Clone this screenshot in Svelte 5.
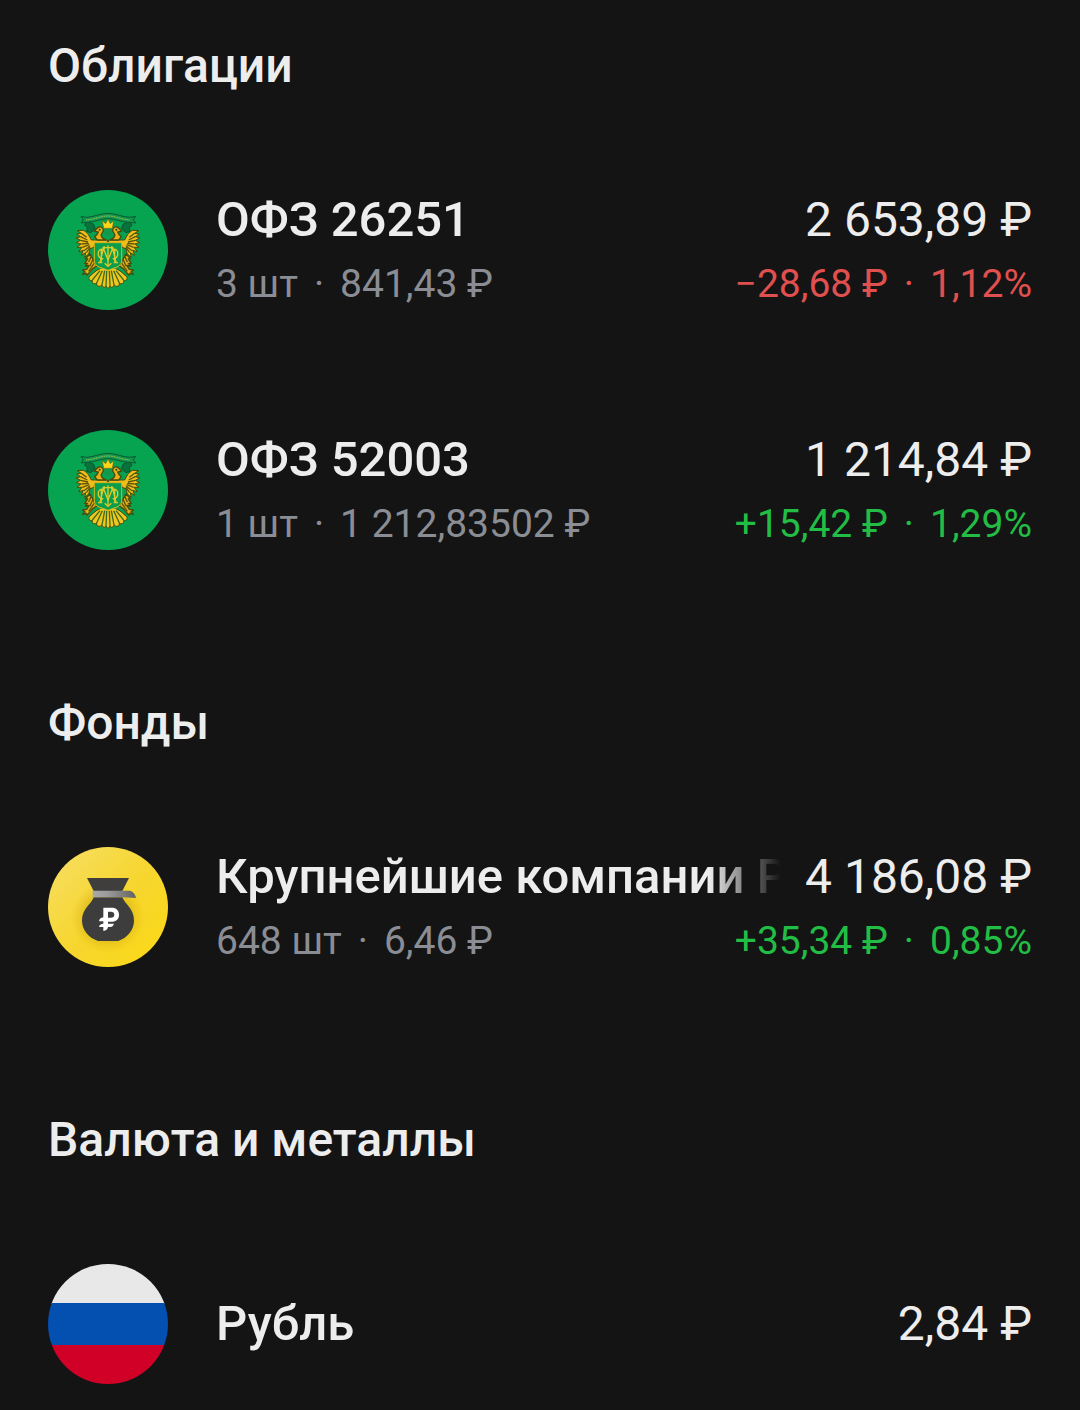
<script lang="ts">
	type Item = {
		icon: 'ofz' | 'fund' | 'rub';
		name: string;
		total: string;
		count?: string;
		price?: string;
		diff?: string;
		percent?: string;
		down?: boolean;
	};

	const groups: { title: string; items: Item[] }[] = [
		{
			title: 'Облигации',
			items: [
				{
					icon: 'ofz',
					name: 'ОФЗ 26251',
					total: '2 653,89 ₽',
					count: '3 шт',
					price: '841,43 ₽',
					diff: '−28,68 ₽',
					percent: '1,12%',
					down: true
				},
				{
					icon: 'ofz',
					name: 'ОФЗ 52003',
					total: '1 214,84 ₽',
					count: '1 шт',
					price: '1 212,83502 ₽',
					diff: '+15,42 ₽',
					percent: '1,29%'
				}
			]
		},
		{
			title: 'Фонды',
			items: [
				{
					icon: 'fund',
					name: 'Крупнейшие компании Р',
					total: '4 186,08 ₽',
					count: '648 шт',
					price: '6,46 ₽',
					diff: '+35,34 ₽',
					percent: '0,85%'
				}
			]
		},
		{
			title: 'Валюта и металлы',
			items: [{ icon: 'rub', name: 'Рубль', total: '2,84 ₽' }]
		}
	];
</script>

{#snippet wing()}
	<!-- half of the eagle, mirrored for the other side -->
	<path
		d="M202 180 L154 180 C148 168 142 156 130 151 L112 152 L124 160 L110 162 L122 170 L108 174 L122 181 L109 188 L123 192 L111 202 L126 202 L116 215 L130 211 L124 226 L137 218 L134 232 L146 222 L150 206 L162 202 L164 190 L202 190 Z"
		fill="#efc01b"
		stroke="#4d4a0c"
		stroke-width="3"
		stroke-linejoin="round"
	/>
	<path
		d="M124 160 L140 172 M122 170 L142 180 M122 181 L144 186 M124 192 L146 190 M127 202 L148 194 M132 212 L150 198 M139 218 L150 202"
		stroke="#5c5208"
		stroke-width="4"
		fill="none"
	/>
	<path
		d="M198 180 C184 174 180 166 187 158 C194 150 188 139 177 141 C169 143 170 149 163 154 L175 156 C173 162 170 166 164 170 L172 180 Z"
		fill="#e4b416"
		stroke="#4d4a0c"
		stroke-width="4"
		stroke-linejoin="round"
	/>
	<circle cx="179" cy="149" r="3" fill="#2d3a0c" />
	<path
		d="M150 222 L136 236 L143 237 L134 250 L143 250 L136 258 L148 256 L140 268 L128 270 L135 276 L128 283 L139 280 L141 286 L158 266 L170 258 L162 244 Z"
		fill="#deb01a"
		stroke="#4d4a0c"
		stroke-width="4"
		stroke-linejoin="round"
	/>
	<path d="M154 228 L146 246 M159 238 L150 258 M164 248 L146 274" stroke="#5c5208" stroke-width="4" />
	<path
		d="M204 266 L180 266 C166 272 158 282 150 288 C143 294 148 304 157 301 C155 309 163 315 170 309 C168 318 179 323 186 315 C187 322 196 324 198 318 L204 326 Z"
		fill="#efc71d"
	/>
	<path
		d="M180 266 C166 272 158 282 150 288 C143 294 148 304 157 301 C155 309 163 315 170 309 C168 318 179 323 186 315 C187 322 196 324 198 318 L204 326"
		fill="none"
		stroke="#4d4a0c"
		stroke-width="3"
	/>
	<path
		d="M180 272 L157 300 M187 272 L170 309 M194 272 L186 315 M200 272 L198 318"
		stroke="#3f6a1c"
		stroke-width="4"
		fill="none"
	/>
{/snippet}

<main class="portfolio">
	{#each groups as group}
		<section class="group">
			<h2 class="group-title">{group.title}</h2>
			<ul class="list">
				{#each group.items as item}
					<li class="row">
						{#if item.icon === 'ofz'}
							<svg class="icon" viewBox="24 30 360 360" aria-hidden="true">
								<circle cx="204" cy="210" r="180" fill="#06a350" />
								<path
									d="M140 124 L134 136 L142 142 L140 154 L152 158 L166 146 L160 132 Z M268 124 L276 136 L268 142 L270 154 L258 158 L244 146 L250 132 Z"
									fill="#08733c"
									stroke="#07552e"
									stroke-width="3"
								/>
								<path
									d="M123 109 L137 112 C160 112 180 100 204 100 C228 100 248 112 271 112 L287 109 L280 119 L287 129 L268 127 C244 127 226 116 204 116 C182 116 164 127 140 127 L123 129 L130 119 Z"
									fill="#12964e"
									stroke="#075b31"
									stroke-width="3"
								/>
								<path
									d="M138 120 C162 119 182 108 204 108 C226 108 246 119 270 120"
									fill="none"
									stroke="#8fb949"
									stroke-width="4"
									stroke-dasharray="3 2"
								/>
								{@render wing()}
								<g transform="translate(408 0) scale(-1 1)">{@render wing()}</g>
								<path
									d="M191 145 L187 122 L197 131 L204 117 L211 131 L221 122 L217 145 Z"
									fill="#ffd51c"
									stroke="#75690d"
									stroke-width="2"
								/>
								<path
									d="M192 148 H216 V156 C216 164 210 168 204 170 C198 168 192 164 192 156 Z"
									fill="#12994e"
								/>
								<path
									d="M163 188 H245 V242 C245 252 238 259 228 262 L204 271 L180 262 C170 259 163 252 163 242 Z"
									fill="#0b9d4e"
									stroke="#d6b81a"
									stroke-width="3"
								/>
								<g fill="none" stroke="#dccb2a" stroke-width="4">
									<path d="M204 196 V258 M188 203 H220 M193 199 V207 M215 199 V207" />
									<path d="M180 248 L190 205 L204 240 L218 205 L228 248 M174 248 H187 M221 248 H234" />
									<path d="M192 209 C169 201 169 239 190 236 M216 209 C239 201 239 239 218 236" />
									<path d="M184 207 V245 M224 207 V245 M194 250 L204 259 L214 250" />
								</g>
							</svg>
						{:else if item.icon === 'fund'}
							<svg class="icon" viewBox="24 30 360 360" aria-hidden="true">
								<defs>
									<linearGradient id="gold" x1="0" y1="0" x2="1" y2="1">
										<stop offset="0" stop-color="#f8df68" />
										<stop offset="0.5" stop-color="#f6d630" />
										<stop offset="1" stop-color="#fbd914" />
									</linearGradient>
									<linearGradient id="tie" x1="0" y1="0" x2="1" y2="0">
										<stop offset="0" stop-color="#a9a9a9" />
										<stop offset="0.35" stop-color="#9b9b9b" />
										<stop offset="1" stop-color="#626262" />
									</linearGradient>
									<radialGradient id="shade">
										<stop offset="0.4" stop-color="#b78d00" stop-opacity="0.6" />
										<stop offset="1" stop-color="#d9b000" stop-opacity="0" />
									</radialGradient>
								</defs>
								<circle cx="204" cy="210" r="180" fill="url(#gold)" />
								<ellipse cx="204" cy="242" rx="112" ry="108" fill="url(#shade)" />
								<path d="M141 123 H267 L247 162 H161 Z" fill="#3f3e3d" />
								<path
									d="M161 181 H247 C255 202 282 215 282 250 C282 281 261 303 235 312 H174 C147 303 126 281 126 250 C126 215 154 202 161 181 Z"
									fill="#3d3d3d"
								/>
								<path d="M158 161 H270 C281 164 286 172 288 183 L248 181 H158 Z" fill="url(#tie)" />
								<path
									d="M190 212 H215 C229 212 237 220 237 233 C237 247 228 254 214 254 H204 V260 H222 C220 266 216 270 211 270 H204 C203 277 198 281 190 282 V270 H177 C178 264 182 260 190 260 V253 H177 C178 246 182 242 190 241 Z M204 224 V242 H213 C219 242 223 239 223 233 C223 227 219 224 213 224 Z"
									fill="#fff"
									fill-rule="evenodd"
								/>
							</svg>
						{:else}
							<svg class="icon" viewBox="0 0 120 120" aria-hidden="true">
								<clipPath id="disc"><circle cx="60" cy="60" r="60" /></clipPath>
								<g clip-path="url(#disc)">
									<rect width="120" height="40" fill="#e8e8e8" />
									<rect y="39" width="120" height="42" fill="#0450b0" />
									<rect y="81" width="120" height="39" fill="#d10026" />
								</g>
							</svg>
						{/if}

						<div class="info">
							<div class="line main-line">
								<span class="name">{item.name}</span>
								<span class="total">{item.total}</span>
							</div>
							{#if item.count}
								<div class="line sub-line">
									<div class="sub">
										<span>{item.count}</span><span class="dot">·</span><span>{item.price}</span>
									</div>
									<div class="sub change" class:down={item.down}>
										<span>{item.diff}</span><span class="dot">·</span><span>{item.percent}</span>
									</div>
								</div>
							{/if}
						</div>
					</li>
				{/each}
			</ul>
		</section>
	{/each}
</main>

<style>
	:global(body) {
		background: #141414;
	}

	.portfolio {
		font-family: Roboto, 'Noto Sans', sans-serif;
		color: #ededed;
	}

	.group + .group {
		margin-top: 47px;
	}

	.group-title {
		margin: 0;
		padding: 36px 48px 34px;
		font-size: 48px;
		font-weight: 500;
		line-height: 60px;
	}

	.list {
		margin: 0;
		padding: 0;
		list-style: none;
	}

	.row {
		display: flex;
		align-items: center;
		min-height: 128px;
		padding: 56px 48px;
	}

	.group:last-child .row {
		padding-bottom: 20px;
	}

	.icon {
		flex: none;
		width: 120px;
		height: 120px;
		margin-right: 48px;
	}

	.info {
		flex: 1;
		min-width: 0;
	}

	.line {
		display: flex;
		justify-content: space-between;
		gap: 24px;
		white-space: nowrap;
	}

	.main-line {
		line-height: 68px;
	}

	.sub-line {
		line-height: 60px;
	}

	.name {
		flex: 1;
		min-width: 0;
		overflow: hidden;
		font-size: 49px;
		font-weight: 500;
		mask-image: linear-gradient(to left, transparent, #000 72px);
	}

	.total {
		font-size: 48px;
	}

	.sub {
		display: flex;
		font-size: 39px;
		color: #8b8d94;
	}

	.dot {
		margin: 0 16px;
	}

	.change {
		color: #22bd45;
	}

	.change.down {
		color: #e0504f;
	}
</style>
